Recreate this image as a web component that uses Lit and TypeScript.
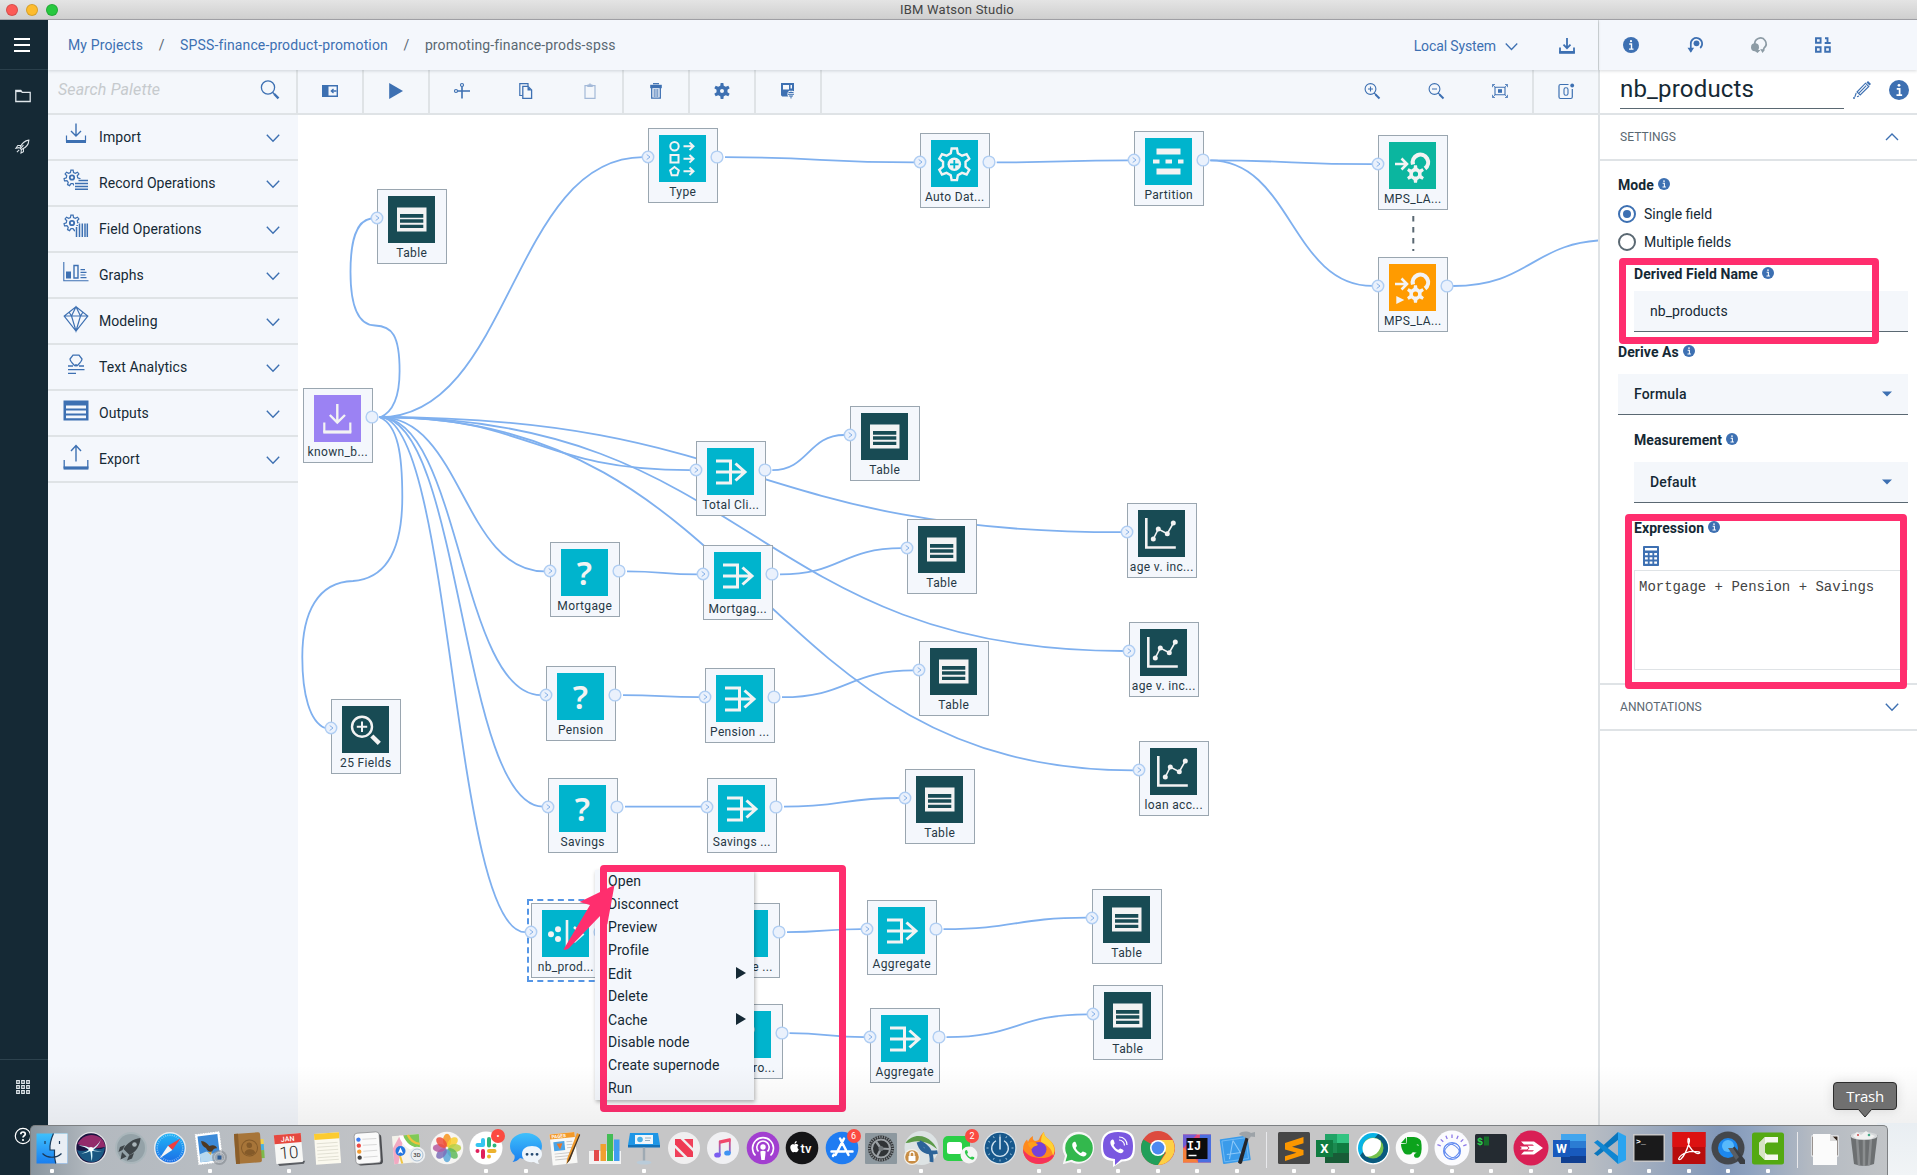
import { LitElement, html, svg, css, nothing } from "lit";
import { customElement, property } from "lit/decorators.js";

/* ---------- geometry helpers ---------- */

/** Closed outline of a cog with n teeth. */
function gear(cx: number, cy: number, outer: number, inner: number, n = 6): string {
  const pts: string[] = [];
  const step = (Math.PI * 2) / n;
  for (let i = 0; i < n; i++) {
    const a = i * step - Math.PI / 2;
    const add = (r: number, o: number) =>
      pts.push(`${(cx + r * Math.cos(a + o * step)).toFixed(2)} ${(cy + r * Math.sin(a + o * step)).toFixed(2)}`);
    add(inner, -0.3);
    add(outer, -0.16);
    add(outer, 0.16);
    add(inner, 0.3);
  }
  return `M${pts.join("L")}Z`;
}

const ring = (cx: number, cy: number, r: number) =>
  `M${cx - r} ${cy}a${r} ${r} 0 1 0 ${r * 2} 0a${r} ${r} 0 1 0 ${-r * 2} 0Z`;

const spokes = (cx: number, cy: number, r1: number, r2: number, n: number, from = 0, to = 360) =>
  Array.from({ length: n }, (_, i) => {
    const a = ((from + ((to - from) * i) / (to - from === 360 ? n : n - 1)) * Math.PI) / 180;
    return `M${cx + r1 * Math.cos(a)} ${cy + r1 * Math.sin(a)}L${cx + r2 * Math.cos(a)} ${cy + r2 * Math.sin(a)}`;
  }).join("");

/* ---------- interface icons (drawn with currentColor) ---------- */

const icons: Record<string, { box: number; art: unknown }> = {
  menu: { box: 16, art: svg`<path d="M0 2h16M0 8h16M0 14h16" stroke-width="2"/>` },
  folder: { box: 16, art: svg`<path d="M.8 13.5V2.5h5l1.4 1.8h8v9.200z" stroke-width="1.3"/><path d="M.8 3.200h5.300" stroke-width="1.800"/>` },
  rocket: {
    box: 16,
    art: svg`<path d="M5 9.500C7 5 10 1.800 14.800 1.200 14.600 6 11.500 9.500 6.800 11.300zM6.200 7 3 7 1 9.800 4.400 9.200M9 10.500 9 13.500 6.400 15 6.800 11.500M4.500 11.500 2 14M9 6.500 5.500 10.500" stroke-width="1.1"/>`,
  },
  grid: {
    box: 16,
    art: svg`<path d="M1.700 1.700h2.600v2.600h-2.600zM6.700 1.700h2.600v2.600h-2.600zM11.700 1.700h2.600v2.600h-2.600zM1.700 6.700h2.600v2.600h-2.600zM6.700 6.700h2.600v2.600h-2.600zM11.700 6.700h2.600v2.600h-2.600zM1.700 11.700h2.600v2.600h-2.600zM6.700 11.700h2.600v2.600h-2.600zM11.700 11.700h2.600v2.600h-2.600z" stroke-width="1.200"/>`,
  },
  help: {
    box: 18,
    art: svg`<circle cx="9" cy="9" r="7.700" stroke-width="1.200"/><path d="M6.800 7.200C6.800 4.300 11.300 4.300 11.300 7.100 11.300 8.900 9 8.700 9 10.600" stroke-width="1.700"/><circle cx="9" cy="13" r="1.100" fill="currentColor" stroke="none"/>`,
  },
  search: { box: 20, art: svg`<circle cx="8" cy="7.500" r="6.600" stroke-width="1.300"/><path d="M12.800 12.500l1.700 1.700" stroke-width="1.300"/><path d="M14.200 14l4.300 4.300" stroke-width="2.400"/>` },
  down: { box: 14, art: svg`<path d="M.8 3.800 7 10.200l6.200-6.400" stroke-width="1.400"/>` },
  up: { box: 14, art: svg`<path d="M1 10 7 4l6 6" stroke-width="1.400"/>` },
  palette: {
    box: 16,
    art: svg`<path d="M.7 2.700h14.600v10.600H.7z" stroke-width="1.400"/><path d="M1 3h5v10H1z" fill="currentColor"/><path d="M14.500 8H9.500M11.500 6 9.300 8l2.200 2" stroke-width="1.300"/>`,
  },
  play: { box: 16, art: svg`<path d="M1.200 0 15 8 1.200 16z" fill="currentColor" stroke="none"/>` },
  cut: {
    box: 16,
    art: svg`<circle cx="8" cy="2" r="1.500" stroke-width="1.200"/><circle cx="2" cy="8" r="1.500" stroke-width="1.200"/><path d="M8 3.500V15.500M3.500 8H16" stroke-width="1.600"/>`,
  },
  copy: {
    box: 16,
    art: svg`<path d="M4.500 12.500H1.800V.7H10V3" stroke-width="1.200"/><path d="M4.800 3.300h5.200l3.600 3.600v8.400H4.800z" stroke-width="1.300"/><path d="M9.500 3.300l4.200 4.200H9.500z" fill="currentColor" stroke="none"/>`,
  },
  paste: { box: 16, art: svg`<path d="M3 2.700h10v12.700H3z" stroke-width="1.200"/><path d="M5.500 3.500h5V2H9L8 .6 7 2H5.500z" stroke-width="1"/>` },
  trash: {
    box: 16,
    art: svg`<path d="M5 .7h6" stroke-width="1.300"/><path d="M2.200 1.800h11.600v3.400H2.200z" fill="currentColor" stroke="none"/><path d="M3.700 5v10.200h8.600V5" stroke-width="1.300"/><path d="M6.200 6v8M8 6v8M9.800 6v8" stroke-width=".9"/>`,
  },
  gear: { box: 16, art: svg`<path d="${gear(8, 8, 8.200, 5.600, 6)}${ring(8, 8, 2)}" fill="currentColor" fill-rule="evenodd" stroke="none"/>` },
  save: {
    box: 16,
    art: svg`<path d="M1 0h13v8l-2 1v4.500H2.200L1 12.300zM3 2v4.500h6V2zM10.500 2v3.500h1.500V2z" fill="currentColor" fill-rule="evenodd" stroke="none"/><circle cx="11" cy="11" r="3.600" fill="#f4f7fb" stroke="none"/><path d="M11 6.500v2M8.500 9.500h5M8 11.300h6M9 13h4M11 13v2.500" stroke-width="1"/>`,
  },
  zoomIn: { box: 16, art: svg`<circle cx="6.500" cy="6" r="5.400" stroke-width="1.100"/><path d="M6.500 3.500v5M4 6h5M10.200 10l2 2" stroke-width="1.100"/><path d="M11.500 11.500l4 4" stroke-width="1.900"/>` },
  zoomOut: { box: 16, art: svg`<circle cx="6.500" cy="6" r="5.400" stroke-width="1.100"/><path d="M4 6h5M10.200 10l2 2" stroke-width="1.100"/><path d="M11.500 11.500l4 4" stroke-width="1.900"/>` },
  fit: {
    box: 16,
    art: svg`<path d="M3 4.200h10v7.600H3z" stroke-width="1.100"/><path d="M6 6.200h4v3.600H6z" fill="currentColor" stroke="none"/><path d="M.5 4.200V1.500H3M13 1.500h2.500v2.700M15.500 11.800v2.700H13M3 14.500H.5v-2.700M.7 1.700l2.400 2.500M15.300 1.700 12.900 4.200M15.300 14.300l-2.400-2.500M.7 14.300l2.400-2.500" stroke-width=".8"/>`,
  },
  notes: {
    box: 16,
    art: svg`<path d="M10.500 1.500H2.500Q1 1.500 1 3v11Q1 15.500 2.500 15.500h10.300Q14.300 15.500 14.300 14V6" stroke-width="1.200"/><circle cx="14.200" cy="2.500" r="1.900" fill="currentColor" stroke="none"/><rect x="6" y="4.800" width="4" height="7.400" rx="1.800" stroke-width="1.100"/>`,
  },
  download: { box: 16, art: svg`<path d="M8 0v10M4.500 6.700 8 10.200l3.500-3.500" stroke-width="1.800"/><path d="M1 9.500v5h14v-5" stroke-width="1.800"/><path d="M.2 14.300h15.600" stroke-width="2.600"/>` },
  info: {
    box: 16,
    art: svg`<circle cx="8" cy="8" r="8" fill="currentColor" stroke="none"/><path d="M6.200 7h2.300v5M6 12.100h4.500" stroke="#fff" stroke-width="1.400"/><circle cx="8" cy="4.200" r="1.100" fill="#fff" stroke="none"/>`,
  },
  version: {
    box: 16,
    art: svg`<path d="M3.800 14.500V7.500A5.700 5.700 0 1 1 13.200 11" stroke-width="1.700"/><path d="M.5 10.800 3.800 15.800 7.100 10.800z" fill="currentColor" stroke="none"/><circle cx="9.500" cy="6.300" r="2.900" fill="currentColor" stroke="none"/>`,
  },
  deploy: {
    box: 16,
    art: svg`<path d="M4 8A5.600 5.600 0 1 1 13.200 10.800l-1.200 3" stroke-width="1.700"/><circle cx="4" cy="10.300" r="4" fill="currentColor" stroke="none"/><path d="M2.500 13h7l-3 3zM9.200 12l4.800.7-2.500 3.300z" fill="currentColor" stroke="none"/>`,
  },
  data: { box: 16, art: svg`<path d="M1 1.200h4.600v4.600H1zM1 10.200h4.600v4.600H1zM10.200 10.200h4.600v4.600h-4.600zM10 1.200h2.500v4.900M9.700 6h6" stroke-width="1.900"/>` },
  pencil: {
    box: 18,
    art: svg`<path d="M4 11 12.500 2.200l3.300 3.300L7.200 14zM5.700 12.300l7.500-7.700" stroke-width="1.100"/><path d="M13.500 1.500 15 0l3 3-1.500 1.500z" fill="currentColor" stroke="none"/><path d="M3.200 12 1.800 16M6 15l-2 .7" stroke-width="1.100"/><circle cx="1" cy="17" r="1" fill="currentColor" stroke="none"/>`,
  },
  caret: { box: 12, art: svg`<path d="M1 3.500h10L6 8.500z" fill="currentColor" stroke="none"/>` },
  calc: {
    box: 20,
    art: svg`<rect x="2" width="16" height="20" rx=".8" fill="currentColor" stroke="none"/><path d="M4 2h12v2.500H4zM4 7h2.800v2.200H4zM8.600 7h2.800v2.200H8.600zM13.200 7H16v2.200h-2.800zM4 11.200h2.800v2.200H4zM8.600 11.200h2.800v2.200H8.600zM13.200 11.200H16v2.200h-2.800zM4 15.600h2.800v2.200H4zM8.600 15.600h2.800v2.200H8.600zM13.200 15.600H16v2.200h-2.800z" fill="#fff" stroke="none"/>`,
  },
  /* palette categories */
  pImport: { box: 26, art: svg`<path d="M13 1.500v12M8 9l5 5 5-5" stroke-width="1.400"/><path d="M3.500 13.500v6M22.500 13.500v6" stroke-width="1.200"/><path d="M3 19.500h20" stroke-width="3"/>` },
  pRecord: {
    box: 26,
    art: svg`<path d="${gear(9, 10, 8, 5.700, 7)}" stroke-width="1.200"/><circle cx="9" cy="9.500" r="2.200" stroke-width="1.800"/><path d="M13 11h14v12H11v-8z" fill="#f4f7fb" stroke="none"/><path d="M15.500 12.500H25M12 15.500h13M12 18.500h13M12 21.300h13" stroke-width="1.500"/>`,
  },
  pField: {
    box: 26,
    art: svg`<path d="${gear(9, 9, 8, 5.700, 7)}" stroke-width="1.200"/><circle cx="9" cy="9" r="2.200" stroke-width="1.800"/><path d="M12 12h3V9h12v16H12z" fill="#f4f7fb" stroke="none"/><path d="M13.500 13v10M16.500 9.500V23M19.300 9.500V23M22 9.500V23M24.300 9.500V23" stroke-width="1.500"/>`,
  },
  pGraphs: {
    box: 26,
    art: svg`<path d="M.8 2v18.800H25.500" stroke-width="1.100"/><path d="M3 11.500h5v7H3z" fill="currentColor" stroke="none"/><path d="M11 5.500h4V18h-4z" stroke-width="1.400"/><path d="M17.500 9.700H22M17.500 12.300h6M17.500 15h5M17.500 17.700h6" stroke-width="1.200"/>`,
  },
  pModel: { box: 26, art: svg`<path d="M13 .8 24.800 10 13 25 1.200 10zM1.200 10h23.600M13 .8 8.500 10 13 25l4.500-15zM6 6l2.500 4M20 6l-2.500 4" stroke-width="1.200"/>` },
  pText: {
    box: 26,
    art: svg`<path d="M11.500 13.500C8 10 7 9 7 7L10 3.200h6L19 7c0 2-1 3-4.500 6.500zM13 12v2.500" stroke-width="1.300"/><path d="M5 14h5M16 14h5M5 17.700h16.500M5 21.300h8" stroke-width="1.300"/>`,
  },
  pOutputs: { box: 26, art: svg`<path d="M.5 2.500h25V22.500H.5zM3 7.500v3h20v-3zM3 12.500v3h20v-3zM3 17.500v2.700h20v-2.700z" fill="currentColor" fill-rule="evenodd" stroke="none"/>` },
  pExport: { box: 26, art: svg`<path d="M13 1.500v16M8 7l5-5.500L18 7" stroke-width="1.400"/><path d="M1.200 16v8.500M24.800 16v8.500" stroke-width="1.300"/><path d="M.6 24h24.800" stroke-width="3.200"/>` },
};

@customElement("ui-icon")
class UiIcon extends LitElement {
  @property() name = "info";
  @property({ type: Number }) size = 16;
  static styles = css`
    :host {
      display: inline-flex;
      flex: none;
    }
    svg {
      display: block;
      overflow: visible;
    }
  `;
  render() {
    const { box, art } = icons[this.name];
    return html`<svg width=${this.size} height=${this.size} viewBox="0 0 ${box} ${box}" fill="none" stroke="currentColor">${art}</svg>`;
  }
}

/* ---------- flow nodes ---------- */

const W = "#f3f3f3";
const merge = svg`<path d="M9 13h14.500v22H9M9 24h28.500M28.500 15.500l9.500 8.500-9.500 8.500" fill="none" stroke="${W}" stroke-width="3"/>`;
const table = svg`<path d="M9 11.500h29.500v24H9zM12 18v3.700h23.300V18zM12 23.300v3.500h23.300v-3.500zM12 28.700v3.300h23.300v-3.300z" fill="${W}" fill-rule="evenodd"/>`;
const question = svg`<text x="23.300" y="35.500" text-anchor="middle" font-family="Noto Sans, sans-serif" font-weight="600" font-size="33" fill="${W}">?</text>`;
const chart = svg`<path d="M8.300 8v29.500h29.500" fill="none" stroke="${W}" stroke-width="2.600"/><path d="M15.300 29l5-10 9 4.700 6-10.700" fill="none" stroke="${W}" stroke-width="1.600"/><circle cx="15.300" cy="29" r="2.500" fill="${W}"/><circle cx="20.300" cy="19" r="2.500" fill="${W}"/><circle cx="29.300" cy="23.700" r="2.500" fill="${W}"/><circle cx="35.300" cy="13" r="2.500" fill="${W}"/>`;
const model = (y: number) => svg`<path d="M6 ${y - 10}h11M12.500 ${y - 15.500}l5.500 5.500-5.500 5.500" fill="none" stroke="${W}" stroke-width="2.600"/>
  <path d="M24 ${y - 9.500}A7.700 7.700 0 1 1 36 ${y - 5.500}" fill="none" stroke="${W}" stroke-width="4.200"/>
  <path d="${gear(26.500, y, 9, 6.200, 6)}${ring(26.500, y, 2.600)}" fill="${W}" fill-rule="evenodd"/>`;

const art: Record<string, { bg: string; g: unknown }> = {
  table: { bg: "#184b54", g: table },
  chart: { bg: "#184b54", g: chart },
  audit: {
    bg: "#184b54",
    g: svg`<circle cx="20" cy="20.700" r="10" fill="none" stroke="${W}" stroke-width="2.400"/><path d="M20 15.500v10.400M14.800 20.700h10.400" stroke="${W}" stroke-width="2"/><path d="M29.800 30l7.500 7.300" stroke="${W}" stroke-width="4.500"/>`,
  },
  source: {
    bg: "#9b82f3",
    g: svg`<path d="M23.300 9v18.500M15.800 20l7.500 7.500L31 20" fill="none" stroke="${W}" stroke-width="2.400"/><path d="M10.300 27.500v10M36.300 27.500v10" stroke="${W}" stroke-width="2.200"/><path d="M9.300 37h28" stroke="${W}" stroke-width="3.200"/>`,
  },
  derive: { bg: "#00b4cd", g: question },
  merge: { bg: "#00b4cd", g: merge },
  type: {
    bg: "#00b4cd",
    g: svg`<g fill="none" stroke="${W}" stroke-width="2"><circle cx="15.500" cy="11.300" r="4.200"/><path d="M11.500 20h8v7.500h-8zM15.500 32l4.300 3.300-1.500 5h-5.600l-1.500-5zM24.500 11.300h10M30.500 7.500l4 3.800-4 3.800M24.500 23.700h10M30.500 20l4 3.800-4 3.800M24.500 36.300h10M30.500 32.500l4 3.800-4 3.800"/></g>`,
  },
  auto: {
    bg: "#00b4cd",
    g: svg`<path d="${gear(23.300, 24.300, 16, 11.500, 6)}" fill="none" stroke="${W}" stroke-width="2.400"/><circle cx="23.300" cy="24.300" r="6.800" fill="${W}"/><path d="M23.300 20v8.600M19 24.300h8.600" stroke="#00b4cd" stroke-width="1.800"/>`,
  },
  partition: { bg: "#00b4cd", g: svg`<path d="M11.500 10.500h24v6h-24zM11.500 30.500h24v6h-24zM8 21.500h6.500v4H8zM20.500 21.500H27v4h-6.500zM33 21.500h5.500v4H33z" fill="${W}"/>` },
  flag: {
    bg: "#00b4cd",
    g: svg`<circle cx="9" cy="24.300" r="3" fill="${W}"/><circle cx="16" cy="19.300" r="3" fill="${W}"/><circle cx="16" cy="29" r="3" fill="${W}"/><path d="M25 10v28M32 17l8.500 7.500L32 32M33 24.400h6" fill="none" stroke="${W}" stroke-width="2.600"/>`,
  },
  train: { bg: "#0bb69f", g: model(32) },
  nugget: { bg: "#ff9b00", g: svg`${model(30)}<path d="M7.300 32l8 4-8 4z" fill="${W}"/>` },
};

type Ports = "in" | "out" | "both";
interface FlowNode {
  id: string;
  x: number;
  y: number;
  kind: string;
  label: string;
  ports: Ports;
  selected?: boolean;
}
const N = (id: string, x: number, y: number, kind: string, label: string, ports: Ports, selected = false): FlowNode => ({ id, x, y, kind, label, ports, selected });

const nodes: FlowNode[] = [
  N("t1", 377.500, 189.500, "table", "Table", "in"),
  N("src", 303.700, 388.500, "source", "known_b...", "out"),
  N("type", 649, 128.500, "type", "Type", "both"),
  N("auto", 920.700, 133.700, "auto", "Auto Dat...", "both"),
  N("part", 1134.300, 131.700, "partition", "Partition", "both"),
  N("m1", 1378.500, 135.500, "train", "MPS_LA...", "in"),
  N("m2", 1378.500, 257.200, "nugget", "MPS_LA...", "both"),
  N("tot", 696.300, 441.500, "merge", "Total Cli...", "both"),
  N("mor", 551, 542.700, "derive", "Mortgage", "both"),
  N("mor2", 704, 545.700, "merge", "Mortgag...", "both"),
  N("pen", 547, 666.500, "derive", "Pension", "both"),
  N("pen2", 706, 668.500, "merge", "Pension ...", "both"),
  N("sav", 549, 778, "derive", "Savings", "both"),
  N("sav2", 708, 778, "merge", "Savings ...", "both"),
  N("aud", 331.500, 699.700, "audit", "25 Fields", "in"),
  N("tt", 850.200, 406.300, "table", "Table", "in"),
  N("tm", 908, 519.500, "table", "Table", "in"),
  N("tp", 919.700, 641.700, "table", "Table", "in"),
  N("ts", 906, 769.300, "table", "Table", "in"),
  N("a1", 1127.500, 503.500, "chart", "age v. inc...", "in"),
  N("a2", 1129.500, 622.300, "chart", "age v. inc...", "in"),
  N("ln", 1139.500, 741.700, "chart", "loan acc...", "in"),
  N("nb", 531.300, 903.500, "flag", "nb_prod...", "both", true),
  N("h1", 711, 903.500, "derive", "Sample ...", "both"),
  N("h2", 713.500, 1004.500, "derive", "Has pro...", "both"),
  N("g1", 867.500, 900.500, "merge", "Aggregate", "both"),
  N("g2", 870.500, 1008.500, "merge", "Aggregate", "both"),
  N("tg1", 1092.500, 889, "table", "Table", "in"),
  N("tg2", 1093.300, 985.700, "table", "Table", "in"),
];

const links: [string, string][] = [
  ["src", "type"], ["type", "auto"], ["auto", "part"], ["part", "m1"], ["part", "m2"],
  ["src", "tot"], ["tot", "tt"], ["src", "a1"], ["src", "a2"], ["src", "ln"],
  ["src", "mor"], ["mor", "mor2"], ["mor2", "tm"], ["src", "pen"], ["pen", "pen2"], ["pen2", "tp"],
  ["src", "sav"], ["sav", "sav2"], ["sav2", "ts"], ["src", "nb"],
  ["h1", "g1"], ["g1", "tg1"], ["h2", "g2"], ["g2", "tg2"],
];

@customElement("flow-node")
class FlowNodeView extends LitElement {
  @property({ attribute: false }) node!: FlowNode;
  static styles = css`
    :host {
      display: block;
      width: 69px;
      height: 74px;
    }
    .card {
      box-sizing: border-box;
      position: relative;
      display: flex;
      flex-direction: column;
      align-items: center;
      width: 69.500px;
      height: 74.500px;
      padding-top: 6px;
      border: 1px solid #9aa6b0;
      background: #f4f7fc;
    }
    .selected::before {
      content: "";
      position: absolute;
      inset: -5px -5px -5px;
      border: 2px dashed #5596e6;
    }
    .pic {
      display: block;
    }
    .label {
      font: 12px/14px Roboto, "Liberation Sans", sans-serif;
      letter-spacing: 0.350px;
      color: #263845;
      white-space: nowrap;
      margin-top: 2.500px;
    }
    .port {
      position: absolute;
      top: 21px;
      width: 14px;
      height: 14px;
    }
    .in {
      left: -7.700px;
    }
    .out {
      right: -7.700px;
    }
  `;
  render() {
    const n = this.node;
    const a = art[n.kind];
    return html`<div class="card ${n.selected ? "selected" : ""}">
      <svg class="pic" width="47" height="47" viewBox="0 0 47 47"><rect width="47" height="47" fill=${a.bg} />${a.g}</svg>
      <span class="label">${n.label}</span>
      ${n.ports !== "out"
        ? html`<svg class="port in" viewBox="0 0 14 14"><circle cx="7" cy="7" r="5.700" fill="#eaf1fc" stroke="#b0cef3" stroke-width="1.500" /><path d="M5.700 4.500 9 7 5.700 9.500" fill="none" stroke="#86b1e8" /></svg>`
        : nothing}
      ${n.ports !== "in"
        ? html`<svg class="port out" viewBox="0 0 14 14"><circle cx="7" cy="7" r="5.900" fill="#eaf1fc" stroke="#b0cef3" stroke-width="1.400" /></svg>`
        : nothing}
    </div>`;
  }
}

@customElement("flow-canvas")
class FlowCanvas extends LitElement {
  static styles = css`
    :host {
      display: block;
      position: relative;
      flex: 1;
      overflow: hidden;
      background: #fff;
    }
    .links {
      position: absolute;
      inset: 0;
    }
    flow-node {
      position: absolute;
    }
  `;
  render() {
    const by = new Map(nodes.map((n) => [n.id, n]));
    const curve = ([from, to]: [string, string]) => {
      const a = by.get(from)!;
      const b = by.get(to)!;
      const sx = a.x + 76, sy = a.y + 28.700, tx = b.x - 6, ty = b.y + 28.700;
      const mx = (sx + tx) / 2;
      return svg`<path d="M${sx} ${sy}C${mx} ${sy} ${mx} ${ty} ${tx} ${ty}"/>`;
    };
    return html`
      <svg class="links" width="1300" height="1060" viewBox="298 115 1300 1060" fill="none" stroke="#7fb0ef" stroke-width="1.800">
        ${links.map(curve)}
        <path d="M380 417.500C398 410 399.600 385 399.600 371C399.600 335 392 326 375 325.500C355 325 350.500 300 350.500 272C350.500 240 356 221 371 218.500" />
        <path d="M380 417.500C398 425 402.300 455 402.300 497C402.300 560 380 579 353 581C318 582 302.300 612 302.300 657C302.300 695 310 722 325 728" />
        <path d="M1453 286C1532 286 1532 240 1612 240" />
        <path d="M1413.300 216V251" stroke="#5a6872" stroke-width="2" stroke-dasharray="5.500 5.500" />
      </svg>
      ${nodes.map((n) => html`<flow-node .node=${n} style="left:${Math.floor(n.x - 298.200)}px;top:${Math.floor(n.y - 115)}px"></flow-node>`)}
    `;
  }
}

/* ---------- dock ---------- */

const T = (x: number, y: number, size: number, fill: string, s: string, weight = 700, family = "Roboto, sans-serif") =>
  svg`<text x="${x}" y="${y}" text-anchor="middle" font-family="${family}" font-weight="${weight}" font-size="${size}" fill="${fill}">${s}</text>`;
const disc = (fill: string, r = 16, stroke = "none", sw = 0) => svg`<circle cx="17" cy="17" r="${r}" fill="${fill}" stroke="${stroke}" stroke-width="${sw}"/>`;
const petals = ["#f7941d", "#f9ce2e", "#b9cf45", "#5fb95a", "#5ba7d8", "#7b6fb8", "#b65aa0", "#ee4c3c"];
const phone = "M11.500 10.500c1.500-1.500 2.500-1 3 .5l.7 2.200c.2.700-1.400 1.500-1 2.300 1 2 2.300 3.300 4.400 4.300.8.300 1.500-1.400 2.200-1.200l2.300.9c1.200.5 1.500 1.500 0 3-3.500 3.500-15-7.500-11.600-12z";

const dockApps: { art: unknown; on?: boolean; badge?: string; gap?: boolean }[] = [
  { on: true, art: svg`<rect x="1.500" y="2.500" width="31" height="30" fill="url(#blue)"/><path d="M18.500 2.500C16 8 14.500 14 15 19h4.500c-.4 4 0 9 1.300 13.500h11.700v-30z" fill="#e9eef4"/><path d="M10 10v3M24.500 10v3M7.500 22.500c5 5 14 5 19 0M18.500 2.500C16 8 14.500 14 15 19h4.500c-.4 4 0 9 1.300 13.500" stroke="#1b3a5a" stroke-width="1.200" fill="none"/>` },
  { art: svg`${disc("#e6e6e8")}${disc("#1a1440", 14.700)}<path d="M3.500 13C7 5 18 .5 27 7c3 3 4 6 4 9L18 18z" fill="#c8357e" opacity=".7"/><path d="M3 19c5 2 10 0 14-1 5-1 9 2 14-2-1 9-6 15-13 15-8 0-13-5-15-12z" fill="#1a8fb8" opacity=".55"/><path d="M4.500 14.500c6 0 9 1 12.500 3 4-1 7-4 10-9-2 5-4.500 8-8 10.500 2.500 1 5.500 1.500 10 1-4.500 1-8 .5-11-.2.5 3.700.7 6.700-.5 10.200-.5-4-.5-7-1.300-10-3 1.500-5 2.500-9 2.500 4-1 6-2 7.800-3.800-3-2-6-3.500-10.500-4.200z" fill="#d9fbff"/><circle cx="17" cy="18.300" r="2.300" fill="#fff"/>` },
  { art: svg`${disc("#aab6bb")}${disc("#94a2a8", 14)}<path d="M26.500 7C19 8 13 12 9.500 18l6 6C22 21 26 15 26.500 7zM11 14l-5 2-1.500 5 4-2zM20 22l-2 5.500-5 2 2-5zM8 21l4.500 4.500-6 3z" fill="#3e4549"/><circle cx="20.500" cy="13.500" r="2.300" fill="#a9b4b9"/>` },
  { art: svg`${disc("#e9ecef")}${disc("url(#safari)", 14.600)}<path d="${spokes(17, 17, 12, 13.500, 36)}" stroke="#d3ecff" stroke-width=".6"/><path d="M27.500 7.500 15 14.800 19.300 19z" fill="#f03e3e"/><path d="M6.500 27.500 15 14.800 19.300 19z" fill="#f4f4f4"/>` },
  { on: true, art: svg`<g transform="rotate(-7 17 17)"><rect x="4" y="2" width="24" height="30" fill="#fff" stroke="#fff" stroke-dasharray="1.500 1"/><rect x="6" y="4" width="20" height="26" fill="#3c8ad8"/><path d="M6 22l7-2 6 3 7-2v9H6z" fill="#b7d8ef"/><path d="M9 9c4 1 6 3 7.500 6 4-1 6.500 0 7.500 3-3-.5-4.500 1-5.500 3-3.500 0-4.500-2-5.500-4.500-2.500-1-4-4-4-7.500z" fill="#4e3822"/><path d="M14 20.500c1.500 1 3 1 4.500 0l-1.500 3.500z" fill="#d9a441"/></g><circle cx="26.500" cy="26.500" r="7.500" fill="#82878d" opacity=".6"/><circle cx="26.500" cy="26.500" r="5" fill="none" stroke="#c5cbd2" stroke-width=".8"/><rect x="24.500" y="24.500" width="4" height="4" fill="#2d5d95"/>` },
  { art: svg`<g transform="rotate(-4 17 17)"><path d="M24 9h8v5h-8z" fill="#f3d24b"/><path d="M24 14h8v6h-8z" fill="#49b2e0"/><path d="M24 20h8v8h-8z" fill="#7cba4b"/><path d="M3 2h24q2 0 2 2v26q0 2-2 2H3z" fill="#a77539"/><path d="M3 2h4v30H3z" fill="#8b5e2a"/><circle cx="17.500" cy="17" r="8" fill="none" stroke="#845a29" stroke-width="1"/><circle cx="17.500" cy="14.300" r="2.800" fill="#845a29"/><path d="M12 22c1-5 10-5 11 0-3 3-8 3-11 0z" fill="#845a29"/></g>` },
  { on: true, art: svg`<g transform="rotate(-5 17 17)"><path d="M4 31h28l-1.500 3H6z" fill="#5b5e63"/><rect x="3" y="3" width="27" height="29" rx="1" fill="#f7f7f5"/><path d="M3 3h27v9H3z" fill="#e5483f"/>${T(16.500, 10.300, 7, "#fff", "JAN", 500)}${T(16.500, 27.500, 17, "#2b2b2b", "10", 300)}</g>` },
  { art: svg`<g transform="rotate(-4 17 17)"><rect x="4" y="2" width="25" height="31" fill="#fbf9ef"/><path d="M4 2h25v6H4z" fill="#fccb2f"/><path d="M6 12h21M6 15.500h21M6 19h21M6 22.500h21M6 26h21M6 29h21" stroke="#dcdacd" stroke-width=".8"/></g>` },
  { art: svg`<g transform="rotate(-4 17 17)"><rect x="6" y="4" width="25" height="30" rx="3" fill="#4a4c50"/><rect x="4" y="1.500" width="25" height="31" rx="3" fill="#fafafa" stroke="#77797c" stroke-width=".6"/><path d="M12 8h14M12 14h14M12 20h14M12 26h14" stroke="#d9d9d9"/><circle cx="8" cy="8" r="2.200" fill="#3d7cf0"/><circle cx="8" cy="14" r="2.200" fill="#ed4b43"/><circle cx="8" cy="20" r="2.200" fill="#f29c33"/><circle cx="8" cy="26" r="2.200" fill="#444"/></g>` },
  { art: svg`<g transform="rotate(-5 17 17)"><rect x="3" y="4" width="27" height="28" fill="#f4f2ea"/><path d="M12 4h18v14c-8 0-12-5-18-14z" fill="#80c957"/><path d="M3 16l8-12h4L7 32H3z" fill="#f2a9c2"/><path d="M14 4c3 9 8 13 16 14v4C19 20 12 14 10 4z" fill="#fff"/><path d="M19 4c2 6 6 9 11 10" stroke="#f2c23c" stroke-width="2.500" fill="none"/><path d="M8 18l3 14" stroke="#f1c540" stroke-width="2"/></g><circle cx="10.500" cy="20" r="5" fill="#2477e0"/><path d="M10.500 16.500l2.700 6.200-2.700-1.400-2.700 1.400z" fill="#fff"/><circle cx="27" cy="24" r="8.200" fill="#eef0f1"/><circle cx="27" cy="24" r="6" fill="none" stroke="#9ab4cc" stroke-width=".8"/>${T(27, 26.300, 6, "#444", "3D", 500)}` },
  { art: svg`${disc("#f6f5f3", 16.300)}${petals.map((c, i) => svg`<ellipse cx="17" cy="9.300" rx="4" ry="6.500" fill="${c}" opacity=".85" transform="rotate(${i * 45} 17 17)"/>`)}` },
  { on: true, badge: "•", art: svg`${disc("#fff", 16.500)}<g stroke-width="4" stroke-linecap="round" fill="none"><path d="M14 9v5M8.500 14H14" stroke="#36c5f0"/><path d="M20 8v6.500M25.500 14.500v0" stroke="#2eb67d"/><path d="M20 20h5.500M20 25.500v0" stroke="#ecb22e"/><path d="M14 20v6M8.500 20v0" stroke="#e01e5a"/></g>` },
  { on: true, art: svg`<path d="M17 2c9 0 16 5.500 16 13S26 28 17 28c-2 0-4-.3-6-.9C9 29 7 31 3.500 31 5.500 29 6 27 5.500 24.500 2.500 22 1 19 1 15 1 7.500 8 2 17 2z" fill="url(#blue)"/><path d="M23 15c6 0 10 3.500 10 8 0 3-1.500 5-4 6.500 0 1.500.5 2.500 1.500 3.500-2 0-4-.7-5.500-2-8 1-12-3-12-8s4-8 10-8z" fill="#eff5fb"/><path d="M18 23.300h.1M23 23.300h.1M28 23.300h.1" stroke="#254a72" stroke-width="2.800" stroke-linecap="round"/>` },
  { art: svg`<g transform="rotate(-6 17 17)"><rect x="3" y="2" width="25" height="31" fill="#f8f8f6"/><path d="M3 2h25v5H3z" fill="#f39a2b"/>${T(12, 6.200, 4.500, "#fff", "PAGES", 700)}<rect x="6" y="10" width="11" height="9" fill="#4ba4e6"/><path d="M9 12h6l-3 6z" fill="#e8772a"/><path d="M19 11h6M19 14h6M19 17h6M6 22h16M6 25h16M6 28h12" stroke="#c9c9c9"/></g><path d="M29 2l3 1.500L22 29l-3.500 4 .5-5z" fill="#ef9a2d"/><path d="M31.300 3.200l.9.500L22 29l-3.500 4z" fill="#3d3228"/>` },
  { art: svg`<rect x="1" y="20" width="32" height="13" fill="#f3f3f3"/><rect x="6" y="19" width="5" height="11" fill="#e34b4b"/><rect x="12.500" y="13" width="5.500" height="17" fill="#f0a02f"/><rect x="19" y="3" width="6" height="27" fill="#43bd55"/><rect x="26" y="8.500" width="5.500" height="21.500" fill="#3f9ef0"/>` },
  { on: true, art: svg`<path d="M3 2h28l2 12H1z" fill="#1e96e6"/><path d="M1 14h32v2.500H1z" fill="#1471b8"/><rect x="8" y="4" width="18" height="9" fill="#f1f6fa"/><circle cx="13" cy="8.500" r="2.800" fill="#4bb1e8"/><path d="M18 7h6M18 9.500h5" stroke="#9cb1c0"/><path d="M15.800 16.500h2.400V30h-2.400z" fill="#9faab3"/><ellipse cx="17" cy="31.500" rx="7.500" ry="2" fill="#b9cbd9"/>` },
  { art: svg`${disc("#f0eff0")}<path d="M8 8h5.500L26 20.500V26h-5.500L8 13.500z" fill="#ef3b54"/><path d="M17 8h9v9zM8 17v9h9z" fill="#f0405a"/>` },
  { art: svg`${disc("#f0f0f3")}<path d="M13 9.500 24.500 7v3.500L13 13z" fill="#f2476a"/><path d="M13.700 10v14M23.800 8v14" stroke="url(#note)" stroke-width="1.800"/><ellipse cx="11.500" cy="24" rx="3.300" ry="2.600" fill="#7b5cf0"/><ellipse cx="21.500" cy="22" rx="3.300" ry="2.600" fill="#3f93f2"/>` },
  { art: svg`${disc("#a23fd0", 16.300)}<g fill="none" stroke="#fff" stroke-width="1.600"><path d="M9.500 24.500a10.500 10.500 0 1 1 15 0"/><path d="M12.500 20.500a6.200 6.200 0 1 1 9 0"/></g><circle cx="17" cy="16" r="2.700" fill="#fff"/><path d="M14.300 20.500q2.700-1.600 5.400 0l-1 8.500h-3.400z" fill="#fff"/>` },
  { art: svg`${disc("#141416", 16.300)}<path d="M9.700 13.500c1-.8 3-.5 3.700.8-1.500 1-1.200 3.200.3 3.900-.6 1.900-1.800 3.600-3 3-.8-.4-1.200-.4-2 0-1.700.6-4.200-3.800-3.200-6.300.7-1.700 2.500-2 4.200-1.400zM9.500 12.800c0-1.500 1-2.500 2.200-2.700.1 1.500-.9 2.700-2.200 2.700z" fill="#fff"/>${T(21, 21.500, 13, "#fff", "tv", 500)}` },
  { badge: "6", art: svg`${disc("#1f7cf2", 16.300)}<path d="M19 7.500 10.500 24M15 7.500l8.500 16.500M6.500 20.500h13M23 20.500h4.500M8 25l1-1.500" stroke="#fff" stroke-width="2.500" stroke-linecap="round"/>` },
  { art: svg`<rect x="1" y="2" width="32" height="31" rx="1" fill="#8d989f"/><circle cx="17" cy="17.500" r="13" fill="#303336"/><path d="${spokes(17, 17.500, 10.500, 13, 30)}" stroke="#8b9094" stroke-width="1.200"/><circle cx="17" cy="17.500" r="9" fill="none" stroke="#9ba0a4" stroke-width="2"/><path d="M17 17.500 25 18M17 17.500l-5-7M17 17.500l-4 8" stroke="#9ba0a4" stroke-width="2.200"/><circle cx="17" cy="17.500" r="2.500" fill="#72777b"/>` },
  { on: true, art: svg`<circle cx="17.500" cy="17" r="17" fill="#dde3e4"/><path d="M1.500 12C8 3 20 3 28 11c3 3 4 5 5 7-7-5-10-7-15-7C11 9 8 12 1.500 12z" fill="#5c9a49"/><path d="M14.500 11c2 8 8 12 19 10M27.500 31c1-10-4-16-12-20" fill="none" stroke="#2c6398" stroke-width="3.800"/><circle cx="8" cy="26" r="8" fill="#f4f1ea"/><circle cx="8" cy="26" r="6.800" fill="#c88d45"/><rect x="4.500" y="25" width="7" height="5" fill="#fff"/><path d="M6 25v-2a2 2 0 0 1 4 0v2" fill="none" stroke="#fff" stroke-width="1.300"/>` },
  { badge: "2", art: svg`<rect y="5" width="27" height="25" rx="5" fill="#2bcf47"/><rect x="4" y="11" width="15" height="12" rx="2.500" fill="#fff"/><circle cx="26" cy="24" r="8.500" fill="#f5f5f5"/><g transform="translate(14 12) scale(.72)"><path d="${phone}" fill="#2fc94c"/></g>` },
  { art: svg`${disc("#dfe7ec", 16.500)}${disc("#17588c", 15.300)}<path d="M17 5.500v13" stroke="#cfe2ef" stroke-width="1.600"/><path d="M13 9.800a8.300 8.300 0 1 0 8 0" fill="none" stroke="#cfe2ef" stroke-width="1.300"/><path d="${spokes(17, 17, 11.500, 13.500, 12)}" stroke="#9fc3da"/>` },
  { on: true, art: svg`<path d="M17 33C8 33 1 27 1 18c0-4 1.500-7 4-9.500L6 11c1-3 3-5 5-6-.5 3 0 4 2 5 3 0 4-1 5-4 1-2 2.500-4 4-5 0 3 1 4 3 6 5 4 8 7 8 13 0 8-7 13-16 13z" fill="#ff8a1e"/><path d="M1 18c0 10 8 15 16 15s16-5 16-13c-3 6-8 7-13 7C12 27 5 25 1 18z" fill="#f5325b"/><path d="M22 1c0 3 1 4 3 6 7 5 9 12 6 18-1-8-6-11-12-14 0-4 1-8 3-10z" fill="#ffd233"/><circle cx="17" cy="18.500" r="7.500" fill="#7542d8"/><path d="M6 12c4-2 8-1 10 2-2 1-5 1-6 4-2-1-4-3-4-6z" fill="#ff9f1a"/>` },
  { on: true, art: svg`<path d="M17 .7A16 16 0 1 1 9 31L.8 33.300 3 25A16 16 0 0 1 17 .7z" fill="#f7f7f7"/>${disc("#33b84d", 13.800)}<path d="M3.500 30.500l2-7 5 5z" fill="#33b84d"/><g transform="translate(-1.500 0.500) scale(1.080)"><path d="${phone}" fill="#fff"/></g>` },
  { on: true, art: svg`<path d="M17-1c13 0 17 4 17 16s-3 15-13 15.500L12 36v-6C2 29 0 25 0 15S4-1 17-1z" fill="#fff"/><path d="M17 1c11 0 15 3.500 15 14S29 28 20 28.500L14 34v-6C4.500 27 2 24 2 15S6 1 17 1z" fill="#7a58e0"/><g transform="translate(-1.500 -1)"><path d="${phone}" fill="#fff"/></g><path d="M18 9c3 0 5.500 2.500 5.500 5.500M18 6c5 0 8 3.500 8 8" fill="none" stroke="#fff" stroke-width="1.200"/>` },
  { on: true, art: svg`${disc("#dd4b3e", 17)}<path d="M17 17 2.300 8.500A17 17 0 0 0 17 34l8-14z" fill="#219f5a"/><path d="M17 34A17 17 0 0 0 31.700 9H17l8 13z" fill="#fdd045"/>${disc("#fff", 8)}${disc("#4c89f0", 6.400)}` },
  { on: true, art: svg`<rect x="3" y="3.500" width="28" height="28" fill="#e2497b"/><path d="M3 16v15.500h16z" fill="#f4803a"/><path d="M20 3.500h11v28H18z" fill="#4a6ee0"/><path d="M3 3.500h14L3 17z" fill="#6f5fd6"/><rect x="6.500" y="7" width="21" height="21" fill="#0c0c0d"/>${T(14, 18.500, 12, "#fff", "IJ", 700, "Liberation Mono, monospace")}<path d="M8.500 24.500h8" stroke="#fff" stroke-width="1.500"/>` },
  { on: true, art: svg`<g transform="rotate(-8 17 17)"><rect x="1" y="6" width="28" height="25" rx="1" fill="#3a9bea"/><path d="M14 9 8 27M14 9l8 18M6 22h18" stroke="#8cc8f8" stroke-width="1.100" fill="none"/><path d="M3 8h24v21H3z" stroke="#7fc2f8" stroke-width=".7" fill="none"/></g><path d="M26 5l3 1-7 26q-2 2-4-.5z" fill="#25262a"/><path d="M19 3c3-3 8-3 12-1l4-1v5l-4-.5-2 2.500-5-2c-2-2-4-1-5-3z" fill="#9da3a8"/>` },
  { on: true, gap: true, art: svg`<rect x="1" y="1" width="32" height="32" rx="1.500" fill="#464646"/><path d="M26.500 6 8 12v6.500L26.500 24v-5L15 15.700l11.500-3.400zM8 18.500l11.500 3.300L8 25.200V30l18.500-6z" fill="#fb9600"/>` },
  { on: true, art: svg`<rect x="9" y="3" width="24" height="29" fill="#1d8a51"/><path d="M21 3h12v9H21z" fill="#33c481"/><path d="M9 3h12v9H9z" fill="#21a366"/><path d="M21 12h12v10H21z" fill="#107c41"/><path d="M9 22h24v10H9z" fill="#185c37"/><rect y="9" width="17" height="17" fill="#107c41"/>${T(8.500, 22, 13, "#fff", "X")}` },
  { on: true, art: svg`${disc("#fff", 16.500)}${disc("#08b3e5", 15)}<path d="M22 3a15 15 0 1 1-18 21.500z" fill="#0a5a7e"/><circle cx="17" cy="17" r="10.500" fill="#74c14c"/><path d="M24.500 10C27 17 20 27 10 25.500A10.500 10.500 0 0 1 24.500 9.700z" fill="#fff"/>` },
  { on: true, art: svg`${disc("#fbfbfb", 16.300)}<path d="M12 6h4c4-.5 9 1 10 4 1 5 1 11-1 15-2 3-6 2-6-.5 0-2 2-2.500 3-2.500-2-1-5-1-5 0-1 2-6 2-8 0-2-3-3-6-3-9l5.500-.5z" fill="#0ca31c"/><path d="M11 6.500V12H6z" fill="#0ca31c"/><path d="M21.500 14c1-.7 2-.5 2.500.7z" fill="#fff"/>` },
  { on: true, art: svg`${disc("#fbfbfe", 17.500)}<g fill="none" stroke="#628bf0" stroke-width="1"><circle cx="17" cy="20" r="8.500"/><ellipse cx="17" cy="20" rx="8.500" ry="6" transform="rotate(35 17 20)"/><ellipse cx="17" cy="20" rx="8.500" ry="6.500" transform="rotate(-40 17 20)"/></g><path d="${spokes(17, 19, 12, 15.500, 7, 200, 340)}" stroke="#8c78e8" stroke-width="1.300"/>` },
  { on: true, art: svg`<rect x="1" y="3" width="32" height="29" rx="1.500" fill="#242b31"/>${T(6, 14, 10, "#2bd34c", "$", 700, "Liberation Mono, monospace")}<rect x="10" y="5.500" width="5" height="9" fill="#16702a"/>` },
  { on: true, art: svg`${disc("#d91f55", 17.500)}<path d="M7 10.500h13l9 6.500H15.500l-2-2.300H20L18.500 13.500H10zM7 23.500h13l9-6.500H15.500l-2 2.300H20l-1.500 1.200H10z" fill="#fff"/><path d="M6 15.500h7l1.500 1.500-1.500 1.500H6L8 17z" fill="#fff"/>` },
  { on: true, art: svg`<rect x="8" y="3" width="25" height="29" fill="#2b7cd3"/><path d="M8 3h25v7H8z" fill="#41a5ee"/><path d="M8 17h25v8H8z" fill="#185abd"/><path d="M8 25h25v7H8z" fill="#103f91"/><rect y="9" width="17" height="17" fill="#185abd"/>${T(8.500, 22, 12.500, "#fff", "W")}` },
  { on: true, art: svg`<path d="M25 1 3.500 20.500 1 22.500l3.500 2.500L25 9z" fill="#0a76bd"/><path d="M25 33 3.500 13.500 1 11.500 4.500 9 25 25z" fill="#1086d2"/><path d="M25 1l8 4v24l-8 4z" fill="#2aa4f0"/>` },
  { on: true, art: svg`<rect x="1" y="3" width="32" height="28" fill="#c7c7c9"/><rect x="2.500" y="4.500" width="29" height="25" fill="#1a1a1b"/>${T(9, 13, 8, "#fff", ">_", 700, "Liberation Mono, monospace")}` },
  { on: true, art: svg`<rect x=".5" y="1" width="33" height="32" fill="#b80c0c"/><path d="M.5 1h33v15H.5z" fill="#dc1212"/><path d="M7 27c2-4 10-8 20-6 2 .5 0 2.500-3 1C18 19 15 12 16 8c1-2 2 1 1 4-2 7-5 13-8 16-1.500 1-3 .5-2-1z" fill="none" stroke="#fff" stroke-width="1.300"/>` },
  { on: true, art: svg`${disc("#44474c", 16.500)}${disc("#1d88ee", 10)}<circle cx="17" cy="15" r="6" fill="#58b9fb"/><path d="M19 19l4.500-3.500L34 29v4h-5z" fill="#3a3d42"/><path d="M17 17h5l6 9-3 3z" fill="#5a5e64"/>` },
  { on: true, art: svg`<rect x="1" y="1.500" width="32" height="32" rx="2.500" fill="#54a912"/><path d="M27 6H14L8 12v11l6 6h13v-5.500H16l-2-2v-8l2-2h11z" fill="#f5f8ee"/><path d="M14 6v23l-6-6V12z" fill="#d6e3c4"/>` },
  { gap: true, art: svg`<rect x="4" y="5" width="26" height="20" fill="#33271f" stroke="#fff"/><path d="M5 3h17l7 7v24H5z" fill="#fbfbfb"/><path d="M22 3v7h7z" fill="#dadada"/>` },
  { art: svg`<path d="M3.500 4h27L27 33q-10 4-20 0z" fill="#6c6f71"/><path d="M10 7l2 27M17 7v28M24 7l-2 27" stroke="#8b8e90" stroke-width="2.500"/><ellipse cx="17" cy="5" rx="13.500" ry="4" fill="#d5d8da"/><path d="M6 5l4-4 4 3 5-4 4 3 5 2-4 3H10z" fill="#f1f1f1"/><circle cx="11" cy="4" r="1" fill="#c44"/><circle cx="22" cy="4" r="1.300" fill="#4a8"/>` },
];

@customElement("mac-dock")
class MacDock extends LitElement {
  static styles = css`
    :host {
      display: block;
    }
    .dock {
      box-sizing: border-box;
      display: flex;
      width: 1858px;
      height: 50px;
      padding: 5px 0 0 1.500px;
      border: 1px solid #7d8083;
      border-bottom: 0;
      border-radius: 5px 5px 0 0;
      background: linear-gradient(90deg, #89959f 0, #b3b9bf 60px, #bbbfc4 250px, #c6c6c7 420px, #c6c6c7 1480px, #b7bcc3 1560px, #8197b8 1690px, #8fa3c0 1720px, #b4bac2 1780px, #c1c4c7 100%);
    }
    .app {
      position: relative;
      display: flex;
      flex-direction: column;
      align-items: center;
      width: 39.500px;
      flex: none;
    }
    .gap {
      margin-left: 17.500px;
    }
    .gap::before {
      content: "";
      position: absolute;
      left: -8.500px;
      top: 1px;
      width: 1px;
      height: 36px;
      background: #e9e9ec;
    }
    svg {
      display: block;
      overflow: visible;
    }
    .dot {
      width: 4px;
      height: 4px;
      margin-top: 4px;
      border-radius: 1px;
      background: #fff;
    }
    .badge {
      position: absolute;
      top: -2px;
      right: 1px;
      width: 14px;
      height: 14px;
      border-radius: 7px;
      background: #fb4a41;
      color: #fff;
      font: 9px/14px Roboto, sans-serif;
      text-align: center;
    }
  `;
  render() {
    return html`
      <div class="dock">
        ${dockApps.map(
          (a) => html`<div class="app ${a.gap ? "gap" : ""}">
            <svg width="34" height="34" viewBox="0 0 34 34">
              <defs>
                <linearGradient id="blue" x1="0" y1="0" x2="0" y2="1"><stop offset="0" stop-color="#3fc0fb" /><stop offset="1" stop-color="#1a7ff0" /></linearGradient>
                <linearGradient id="safari" x1="0" y1="0" x2="0" y2="1"><stop offset="0" stop-color="#22b4f5" /><stop offset="1" stop-color="#1b6ee6" /></linearGradient>
                <linearGradient id="note" gradientUnits="userSpaceOnUse" x1="0" y1="8" x2="0" y2="24"><stop offset="0" stop-color="#f2476a" /><stop offset="1" stop-color="#5f74f2" /></linearGradient>
              </defs>
              ${a.art}
            </svg>
            ${a.on ? html`<i class="dot"></i>` : nothing} ${a.badge ? html`<span class="badge">${a.badge}</span>` : nothing}
          </div>`
        )}
      </div>
    `;
  }
}

/* ---------- page ---------- */

const categories: [string, string][] = [
  ["pImport", "Import"],
  ["pRecord", "Record Operations"],
  ["pField", "Field Operations"],
  ["pGraphs", "Graphs"],
  ["pModel", "Modeling"],
  ["pText", "Text Analytics"],
  ["pOutputs", "Outputs"],
  ["pExport", "Export"],
];

const tools = [["palette"], ["play"], ["cut", "copy", "paste"], ["trash"], ["gear"], ["save"]];

const menu: { label: string; sub?: boolean }[] = [
  { label: "Open" },
  { label: "Disconnect" },
  { label: "Preview" },
  { label: "Profile" },
  { label: "Edit", sub: true },
  { label: "Delete" },
  { label: "Cache", sub: true },
  { label: "Disable node" },
  { label: "Create supernode" },
  { label: "Run" },
];

@customElement("app-root")
class AppRoot extends LitElement {
  static styles = css`
    :host {
      display: block;
      position: relative;
      width: 1917px;
      height: 1175px;
      overflow: hidden;
      background: #fff;
      color: #152935;
      font: 14px/20px Roboto, "Liberation Sans", sans-serif;
      letter-spacing: 0.130px;
    }
    * {
      box-sizing: border-box;
    }
    .titlebar {
      display: grid;
      grid-template-columns: 60px 1fr 63px;
      align-items: center;
      height: 20px;
      background: linear-gradient(#e4e4e4, #cfcfcf);
      border-bottom: 1px solid #a3a3a8;
      font-size: 13px;
      color: #444;
      text-align: center;
      letter-spacing: 0.200px;
    }
    .lights {
      display: flex;
      gap: 8px;
      padding-left: 6px;
    }
    .lights i {
      width: 12px;
      height: 12px;
      border-radius: 50%;
      border: 0.500px solid rgba(0, 0, 0, 0.150);
    }
    .red {
      background: #fc5b57;
    }
    .amber {
      background: #fdbc2e;
    }
    .green {
      background: #27c83f;
    }
    .shell {
      display: flex;
      height: 1155px;
    }
    .rail {
      display: flex;
      flex-direction: column;
      width: 48px;
      background: #152935;
      color: #fff;
    }
    .rail .cell {
      display: flex;
      height: 50px;
      align-items: center;
      padding-left: 14px;
    }
    .rail .first {
      border-bottom: 1px solid #2a3f4b;
    }
    .rail .thin {
      padding: 2px 0 0 15px;
      color: #dfe6eb;
    }
    .rail .foot {
      margin-top: auto;
      height: 116px;
      border-top: 1px solid #2d424e;
    }
    .rail .foot .cell {
      height: 52px;
    }
    .rail .foot .last {
      height: 48px;
    }
    .main {
      display: flex;
      flex-direction: column;
      width: 1550px;
    }
    .header {
      position: relative;
      display: flex;
      align-items: center;
      height: 50px;
      padding: 0 23px 0 20px;
      background: #f4f7fc;
      box-shadow: 0 1px 3px rgba(60, 70, 80, 0.200);
      color: #5a6872;
      z-index: 1;
    }
    .link {
      color: #3d70b2;
    }
    .slash {
      width: 37px;
      text-align: center;
    }
    .system {
      display: flex;
      align-items: center;
      gap: 9px;
      margin-left: auto;
      padding-top: 2px;
      color: #3d70b2;
      letter-spacing: -0.120px;
    }
    .export {
      margin-left: 41px;
      color: #3d70b2;
      padding-top: 2px;
    }
    .toolbar {
      display: flex;
      height: 45px;
      background: #f4f7fb;
      border-bottom: 2px solid #dfe3e6;
      color: #3d70b2;
    }
    .find {
      display: flex;
      align-items: center;
      justify-content: space-between;
      width: 250px;
      padding: 0 16px 3px 10px;
      border-right: 2px solid #dfe3e6;
    }
    .find span {
      font-size: 16px;
      font-style: italic;
      color: #c6cacd;
      letter-spacing: 0.150px;
    }
    .tools {
      display: flex;
      border-right: 2px solid #dfe3e6;
    }
    .tools ui-icon,
    .end ui-icon {
      width: 64px;
      align-items: center;
      justify-content: center;
      padding-bottom: 1px;
    }
    .tools .paste {
      color: #a3b9d8;
    }
    .zoom {
      margin-left: auto;
    }
    .end {
      display: flex;
    }
    .work {
      display: flex;
      flex: 1;
      min-height: 0;
    }
    .palette {
      width: 250px;
      background: #f4f7fc;
    }
    .cat {
      display: flex;
      align-items: center;
      height: 46px;
      padding: 0 18px 0 15px;
      border-bottom: 2px solid #dfe3e6;
      letter-spacing: 0.080px;
    }
    .cat .pic {
      color: #3d70b2;
      margin-top: -5px;
    }
    .cat span {
      flex: 1;
      padding-left: 10px;
    }
    .cat .chev {
      color: #3d70b2;
      padding-top: 1px;
    }
    .side {
      width: 319px;
      background: #fff;
      border-left: 2px solid #dfe3e6;
    }
    .sidehead {
      position: relative;
      display: flex;
      align-items: center;
      gap: 48px;
      height: 50px;
      margin-left: -1px;
      padding-left: 24px;
      background: #f4f7fc;
      box-shadow: 0 1px 3px rgba(60, 70, 80, 0.200);
      color: #3d70b2;
    }
    .sidehead .off {
      color: #8c9ba5;
    }
    .name {
      display: flex;
      align-items: center;
      height: 45px;
      padding: 0 8px 4px 20px;
      border-bottom: 2px solid #dfe3e6;
      color: #3d70b2;
    }
    .name .title {
      width: 224px;
      height: 39px;
      border-bottom: 1px solid #5a6872;
      font-size: 24px;
      line-height: 38px;
      font-weight: 400;
      color: #152935;
      letter-spacing: 0.180px;
    }
    .name .edit {
      margin-left: 9px;
    }
    .name .about {
      margin-left: auto;
    }
    .section {
      display: flex;
      align-items: center;
      justify-content: space-between;
      height: 46px;
      padding: 0 18px 0 20px;
      border-bottom: 2px solid #dfe3e6;
      color: #5a6872;
      font-size: 12px;
      letter-spacing: 0.050px;
    }
    .section ui-icon {
      color: #3d70b2;
    }
    .form {
      display: flex;
      flex-direction: column;
      height: 524px;
      padding: 14px 9px 0 18px;
      border-bottom: 2px solid #dfe3e6;
    }
    .field {
      display: flex;
      align-items: center;
      gap: 4px;
      height: 20px;
      font-weight: 700;
      letter-spacing: 0.080px;
    }
    .field ui-icon {
      color: #3d70b2;
      margin-top: -2px;
    }
    .radios {
      padding-top: 5px;
      height: 69px;
    }
    .radio {
      display: flex;
      align-items: center;
      gap: 8px;
      height: 28px;
      letter-spacing: 0;
    }
    .dot {
      display: flex;
      align-items: center;
      justify-content: center;
      width: 18px;
      height: 18px;
      border-radius: 50%;
      border: 2px solid #5a6872;
    }
    .dot.on {
      border-color: #3d70b2;
    }
    .dot.on::after {
      content: "";
      width: 8px;
      height: 8px;
      border-radius: 50%;
      background: #3d70b2;
    }
    .indent {
      margin-left: 16px;
    }
    .box {
      display: flex;
      align-items: center;
      justify-content: space-between;
      height: 41px;
      margin-top: 7px;
      margin-bottom: 10px;
      padding: 0 15px 0 16px;
      background: #f4f7fb;
      border-bottom: 1px solid #5a6872;
      letter-spacing: 0.050px;
    }
    .pick {
      margin-top: 12px;
      margin-bottom: 15px;
      font-weight: 500;
      letter-spacing: 0.150px;
    }
    .pick ui-icon {
      color: #3d70b2;
    }
    .calc {
      height: 20px;
      margin: 8px 0 4px 23px;
      color: #3d70b2;
    }
    .code {
      height: 100px;
      padding: 6px 4px;
      border: 1px solid #dfe3e6;
      font: 14px/20px "Liberation Mono", monospace;
      letter-spacing: 0;
      color: #444;
    }
    .menu {
      position: absolute;
      left: 595px;
      top: 870px;
      width: 159px;
      height: 230px;
      background: #f4f7fc;
      box-shadow: 1px 2px 4px rgba(0, 0, 0, 0.300);
    }
    .item {
      display: flex;
      align-items: center;
      justify-content: space-between;
      height: 23px;
      padding: 0 8px 2px 13px;
      letter-spacing: 0.080px;
    }
    .sub {
      padding-top: 1px;
      padding-bottom: 0;
    }
    .item svg {
      margin-top: -2px;
    }
    .mark {
      position: absolute;
      border: 7px solid #ff2e6e;
      border-radius: 4px;
    }
    .mark.a {
      left: 600px;
      top: 865px;
      width: 246px;
      height: 247px;
    }
    .mark.b {
      left: 1619px;
      top: 258px;
      width: 260px;
      height: 86px;
    }
    .mark.c {
      left: 1625px;
      top: 514px;
      width: 282px;
      height: 175px;
    }
    .arrow {
      position: absolute;
      left: 560px;
      top: 880px;
    }
    .shade {
      position: absolute;
      left: 48px;
      right: 0;
      bottom: 50px;
      height: 60px;
      background: linear-gradient(rgba(0, 0, 0, 0), rgba(0, 0, 0, 0.060));
    }
    .corner {
      position: absolute;
      right: 0;
      bottom: 0;
      width: 40px;
      height: 52px;
      background: linear-gradient(#e9eef2, #f1f4f6);
    }
    mac-dock {
      position: absolute;
      left: 29.500px;
      bottom: 0;
    }
    .tip {
      position: absolute;
      left: 1833px;
      top: 1082px;
      width: 64px;
      height: 28px;
      border: 1px solid #2c2c2c;
      border-radius: 4px;
      background: #707070;
      color: #fff;
      font: 15px/26px "Open Sans", sans-serif;
      letter-spacing: -0.300px;
      text-align: center;
      box-shadow: 0 0 12px rgba(0, 0, 0, 0.120);
    }
    .tip svg {
      position: absolute;
      left: 23px;
      top: 25px;
    }
  `;

  private label(text: string, cls = "") {
    return html`<div class="field ${cls}"><span>${text}</span><ui-icon name="info" .size=${12}></ui-icon></div>`;
  }

  render() {
    return html`
      <div class="titlebar">
        <div class="lights"><i class="red"></i><i class="amber"></i><i class="green"></i></div>
        <span>IBM Watson Studio</span>
      </div>
      <div class="shell">
        <nav class="rail">
          <div class="cell first"><ui-icon name="menu"></ui-icon></div>
          <div class="cell thin"><ui-icon name="folder"></ui-icon></div>
          <div class="cell thin"><ui-icon name="rocket" .size=${15}></ui-icon></div>
          <div class="foot">
            <div class="cell thin"><ui-icon name="grid"></ui-icon></div>
            <div class="cell last"><ui-icon name="help" .size=${18}></ui-icon></div>
          </div>
        </nav>
        <div class="main">
          <header class="header">
            <span class="link">My Projects</span><span class="slash">/</span>
            <span class="link">SPSS-finance-product-promotion</span><span class="slash">/</span>
            <span>promoting-finance-prods-spss</span>
            <div class="system">Local System<ui-icon name="down" .size=${13}></ui-icon></div>
            <ui-icon class="export" name="download"></ui-icon>
          </header>
          <div class="toolbar">
            <div class="find"><span>Search Palette</span><ui-icon name="search" .size=${20}></ui-icon></div>
            ${tools.map((g) => html`<div class="tools">${g.map((t) => html`<ui-icon class=${t} name=${t}></ui-icon>`)}</div>`)}
            <div class="tools zoom"><ui-icon name="zoomIn"></ui-icon><ui-icon name="zoomOut"></ui-icon><ui-icon name="fit"></ui-icon></div>
            <div class="end"><ui-icon name="notes"></ui-icon></div>
          </div>
          <div class="work">
            <aside class="palette">
              ${categories.map(
                ([icon, text]) => html`<div class="cat"><ui-icon class="pic" name=${icon} .size=${26}></ui-icon><span>${text}</span><ui-icon class="chev" name="down" .size=${14}></ui-icon></div>`
              )}
            </aside>
            <flow-canvas></flow-canvas>
          </div>
        </div>
        <aside class="side">
          <div class="sidehead">
            <ui-icon name="info"></ui-icon><ui-icon name="version"></ui-icon><ui-icon class="off" name="deploy"></ui-icon><ui-icon name="data"></ui-icon>
          </div>
          <div class="name">
            <div class="title">nb_products</div>
            <ui-icon class="edit" name="pencil" .size=${18}></ui-icon>
            <ui-icon class="about" name="info" .size=${20}></ui-icon>
          </div>
          <div class="section">SETTINGS<ui-icon name="up" .size=${14}></ui-icon></div>
          <div class="form">
            ${this.label("Mode")}
            <div class="radios">
              <div class="radio"><i class="dot on"></i>Single field</div>
              <div class="radio"><i class="dot"></i>Multiple fields</div>
            </div>
            ${this.label("Derived Field Name", "indent")}
            <div class="box indent">nb_products</div>
            ${this.label("Derive As")}
            <div class="box pick">Formula<ui-icon name="caret" .size=${12}></ui-icon></div>
            ${this.label("Measurement", "indent")}
            <div class="box pick indent">Default<ui-icon name="caret" .size=${12}></ui-icon></div>
            ${this.label("Expression", "indent")}
            <div class="calc"><ui-icon name="calc" .size=${20}></ui-icon></div>
            <div class="code indent">Mortgage + Pension + Savings</div>
          </div>
          <div class="section">ANNOTATIONS<ui-icon name="down" .size=${14}></ui-icon></div>
        </aside>
      </div>

      <div class="menu">
        ${menu.map(
          (m) => html`<div class="item ${m.sub ? "sub" : ""}">
            ${m.label}${m.sub ? html`<svg width="10" height="12" viewBox="0 0 10 12"><path d="M0 0 10 6 0 12z" fill="#152935" /></svg>` : nothing}
          </div>`
        )}
      </div>
      <div class="mark a"></div>
      <svg class="arrow" width="60" height="75" viewBox="560 880 60 75">
        <path d="M614.500 885 579.500 902 590 905 563.500 949.500Q567 951 571 946L601 915 607.300 924.500z" fill="#ff2e6e" />
      </svg>
      <div class="mark b"></div>
      <div class="mark c"></div>

      <div class="shade"></div>
      <div class="corner"></div>
      <mac-dock></mac-dock>
      <div class="tip">Trash<svg width="16" height="10" viewBox="0 0 16 10"><path d="M1 1 8 9 15 1z" fill="#707070" /><path d="M1.500 1.500 8 9l6.500-7.500" fill="none" stroke="#2c2c2c" /></svg></div>
    `;
  }
}
